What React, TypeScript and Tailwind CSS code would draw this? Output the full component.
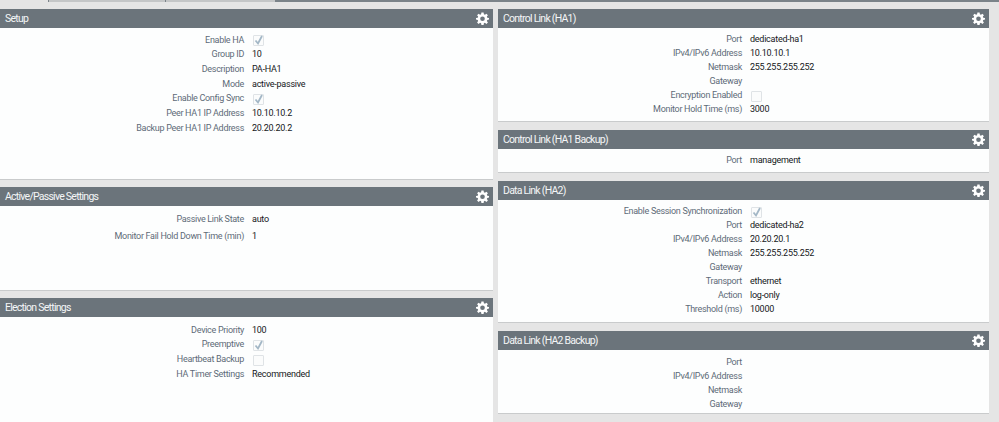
import React from "react"

type Row = { label: string; value?: string; check?: boolean }

const Gear = () => (
	<svg viewBox="0 0 24 24" className="w-[13px] h-[13px]" fill="#ffffff">
		<path
			fillRule="evenodd"
			d="M10 1h4l.6 3.2 1.9.8L19.2 3 22 5.8l-2 2.7.8 1.9L24 11v3l-3.2.6-.8 1.9 2 2.7-2.8 2.8-2.7-2-1.9.8L14 24h-4l-.6-3.2-1.9-.8-2.7 2L2 19.2l2-2.7-.8-1.9L0 14v-3l3.2-.6.8-1.9-2-2.7L4.8 3l2.7 2 1.9-.8zM12 8.2a4.3 4.3 0 1 0 0 8.6 4.3 4.3 0 0 0 0-8.6z"
		/>
	</svg>
)

const Check = ({ on }: { on: boolean }) => (
	<span className="ml-[1px] mt-[1px] w-[11px] h-[11px] border border-[#dfe3e6] bg-[#fbfcfc] flex items-center justify-center rounded-[1px]">
		{on && (
			<svg viewBox="0 0 11 11" className="w-[11px] h-[11px] shrink-0" fill="none">
				<path d="M2.5 5.5 L5 8.5 L9 1" stroke="#a3b7c6" strokeWidth="1.8" />
			</svg>
		)}
	</span>
)

const Panel = ({
	title,
	rows,
	className,
	rowClass,
	first,
}: {
	title: string
	rows: Row[]
	className: string
	rowClass: string
	first: string
}) => (
	<section className={`flex flex-col bg-[#fdfefe] border-b border-[#c9cbcc] ${className}`}>
		<div className="h-[19px] shrink-0 bg-[#6b747b] flex items-center justify-between pl-[5px] pr-[4px] text-[10.5px] text-[#f4f6f7] tracking-[-0.75px]">
			<span>{title}</span>
			<Gear />
		</div>
		<div className={first}>
			{rows.map((r) => (
				<div key={r.label} className={`flex items-center ${rowClass}`}>
					<span className="w-[244px] text-right text-[#5d6b78] whitespace-nowrap tracking-[-0.3px]">{r.label}</span>
					<span className="ml-2 text-[#15181b] whitespace-nowrap tracking-[-0.25px]">
						{r.check !== undefined ? <Check on={r.check} /> : r.value}
					</span>
				</div>
			))}
		</div>
	</section>
)

export default function App() {
	return (
		<div className="w-[999px] h-[422px] overflow-hidden bg-[#e5e5e5] text-[9px] font-['Roboto',Arial,sans-serif] relative">
			<div className="h-[2px] flex">
				<div className="w-[48px] bg-[#e5e5e5]" />
				<div className="w-[117px] bg-[#c4c6c7] border-l border-[#7b8389]" />
				<div className="w-[110px] bg-[#c4c6c7] border-l border-[#7b8389]" />
				<div className="flex-1 bg-[#7b8389]" />
			</div>
			<div className="flex gap-[5px] pt-[7px] w-[989px]">
				<div className="w-[493px] flex flex-col gap-[7px]">
					<Panel
						title="Setup"
						className="h-[171px]"
						rowClass="h-[14.67px]"
						first="pt-[5px]"
						rows={[
							{ label: "Enable HA", check: true },
							{ label: "Group ID", value: "10" },
							{ label: "Description", value: "PA-HA1" },
							{ label: "Mode", value: "active-passive" },
							{ label: "Enable Config Sync", check: true },
							{ label: "Peer HA1 IP Address", value: "10.10.10.2" },
							{ label: "Backup Peer HA1 IP Address", value: "20.20.20.2" },
						]}
					/>
					<Panel
						title="Active/Passive Settings"
						className="h-[104px]"
						rowClass="h-[16.3px]"
						first="pt-[6px]"
						rows={[
							{ label: "Passive Link State", value: "auto" },
							{ label: "Monitor Fail Hold Down Time (min)", value: "1" },
						]}
					/>
					<Panel
						title="Election Settings"
						className="h-[130px]"
						rowClass="h-[14.67px]"
						first="pt-[6px]"
						rows={[
							{ label: "Device Priority", value: "100" },
							{ label: "Preemptive", check: true },
							{ label: "Heartbeat Backup", check: false },
							{ label: "HA Timer Settings", value: "Recommended" },
						]}
					/>
				</div>
				<div className="w-[491px] flex flex-col gap-[8px]">
					<Panel
						title="Control Link (HA1)"
						className="h-[113px]"
						rowClass="h-[14px]"
						first="pt-[5px]"
						rows={[
							{ label: "Port", value: "dedicated-ha1" },
							{ label: "IPv4/IPv6 Address", value: "10.10.10.1" },
							{ label: "Netmask", value: "255.255.255.252" },
							{ label: "Gateway" },
							{ label: "Encryption Enabled", check: false },
							{ label: "Monitor Hold Time (ms)", value: "3000" },
						]}
					/>
					<Panel
						title="Control Link (HA1 Backup)"
						className="h-[43px]"
						rowClass="h-[14px]"
						first="pt-[5px]"
						rows={[{ label: "Port", value: "management" }]}
					/>
					<Panel
						title="Data Link (HA2)"
						className="h-[142px]"
						rowClass="h-[14px]"
						first="pt-[5px]"
						rows={[
							{ label: "Enable Session Synchronization", check: true },
							{ label: "Port", value: "dedicated-ha2" },
							{ label: "IPv4/IPv6 Address", value: "20.20.20.1" },
							{ label: "Netmask", value: "255.255.255.252" },
							{ label: "Gateway" },
							{ label: "Transport", value: "ethernet" },
							{ label: "Action", value: "log-only" },
							{ label: "Threshold (ms)", value: "10000" },
						]}
					/>
					<Panel
						title="Data Link (HA2 Backup)"
						className="h-[83px]"
						rowClass="h-[14px]"
						first="pt-[6px]"
						rows={[
							{ label: "Port" },
							{ label: "IPv4/IPv6 Address" },
							{ label: "Netmask" },
							{ label: "Gateway" },
						]}
					/>
				</div>
			</div>
		</div>
	)
}
